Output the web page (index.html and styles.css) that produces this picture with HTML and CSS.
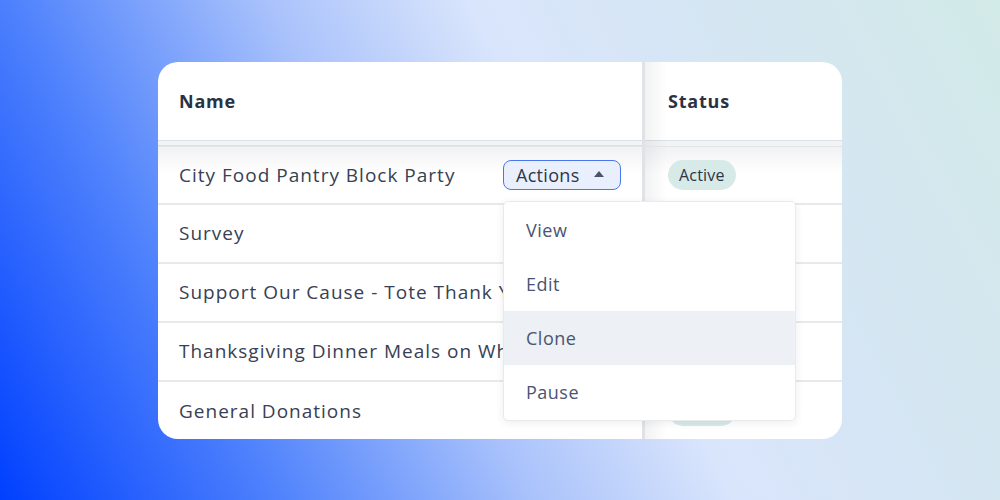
FILE: index.html
```html
<!DOCTYPE html>
<html lang="en">
<head>
    <meta charset="UTF-8">
    <meta name="viewport" content="width=device-width, initial-scale=1.0">
    <title>Campaigns</title>
    <link rel="stylesheet" href="styles.css">
</head>
<body>
    <div class="stage">
        <div class="card">
            <div class="table">
                <div class="row head">
                    <div class="cell name-cell">Name</div>
                    <div class="cell status-cell">Status</div>
                </div>
                <div class="row first">
                    <div class="cell name-cell">
                        <span class="name">City Food Pantry Block Party</span>
                        <button class="actions-btn">Actions <span class="caret"></span></button>
                    </div>
                    <div class="cell status-cell"><span class="badge">Active</span></div>
                </div>
                <div class="row">
                    <div class="cell name-cell"><span class="name">Survey</span></div>
                    <div class="cell status-cell"></div>
                </div>
                <div class="row">
                    <div class="cell name-cell"><span class="name">Support Our Cause - Tote Thank You</span></div>
                    <div class="cell status-cell"></div>
                </div>
                <div class="row">
                    <div class="cell name-cell"><span class="name">Thanksgiving Dinner Meals on Wheels</span></div>
                    <div class="cell status-cell"></div>
                </div>
                <div class="row last">
                    <div class="cell name-cell"><span class="name">General Donations</span></div>
                    <div class="cell status-cell"><span class="badge">Active</span></div>
                </div>
            </div>

            <ul class="menu">
                <li>View</li>
                <li>Edit</li>
                <li class="hover">Clone</li>
                <li>Pause</li>
            </ul>
        </div>
    </div>
</body>
</html>
```

FILE: styles.css
```css
* {
    box-sizing: border-box;
}
body {
    margin: 0;
    width: 1000px;
    height: 500px;
    overflow: hidden;
    font-family: "Open Sans", "Noto Sans", sans-serif;
    color: #384054;
    background: linear-gradient(62deg, #0040ff 0%, #4f82fc 22%, #a9c2fb 42%, #d9e5fc 58%, #d5e6f2 78%, #d2eae8 100%);
}
.stage {
    height: 500px;
    display: flex;
    align-items: center;
    justify-content: center;
}
.card {
    position: relative;
    width: 684px;
    height: 377px;
    background: #fff;
    border-radius: 20px;
    overflow: hidden;
}
.table {
    display: flex;
    flex-direction: column;
}
.row {
    display: grid;
    grid-template-columns: 484px 200px;
    height: 59px;
    border-bottom: 2px solid #e7e9ec;
}
.cell {
    display: flex;
    align-items: center;
    font-size: 18px;
}
.name-cell {
    padding: 0 21px 0 21px;
    justify-content: space-between;
    white-space: nowrap;
    overflow: hidden;
}
.status-cell {
    padding-left: 23px;
    border-left: 3px solid #e0e2e6;
    background: linear-gradient(90deg, rgba(30, 40, 60, 0.06), rgba(30, 40, 60, 0) 22px);
}
.row.head {
    height: 84px;
    border-bottom: none;
    box-shadow: 0 -5px 0 #f2f3f5 inset, 0 -6px 0 #dcdfe3 inset;
    position: relative;
}
.row.head .cell {
    font-weight: 700;
    color: #2b3244;
    letter-spacing: 0.8px;
    padding-bottom: 5px;
}
.row.head .name-cell {
    border-bottom: 1px solid #dcdfe3;
}
.row.first {
    border-top: 1px solid #e2e4e8;
    background: linear-gradient(180deg, #f1f2f4 0, #fff 26px);
    height: 59px;
}
.row.last {
    border-bottom: none;
}
.name {
    display: block;
    max-width: 324px;
    overflow: hidden;
    font-size: 19px;
    letter-spacing: 1px;
}
.actions-btn {
    display: flex;
    align-items: center;
    height: 30px;
    width: 118px;
    padding: 0 0 0 12px;
    gap: 14px;
    border: 1.5px solid #4776ee;
    border-radius: 8px;
    background: #e9effd;
    color: #2f3648;
    font-family: inherit;
    font-size: 18px;
    letter-spacing: 0.3px;
}
.caret {
    width: 0;
    height: 0;
    border-left: 5px solid transparent;
    border-right: 5px solid transparent;
    border-bottom: 6px solid #4b5367;
    margin-top: -2px;
}
.badge {
    display: inline-flex;
    align-items: center;
    height: 30px;
    padding: 0 11px;
    border-radius: 15px;
    background: #d7eae8;
    color: #2c3446;
    font-size: 16px;
    letter-spacing: 0.2px;
}
.menu {
    position: absolute;
    left: 345px;
    top: 139px;
    width: 293px;
    margin: 0;
    padding: 1px 0;
    list-style: none;
    background: #fff;
    border: 1px solid #e8eaed;
    border-radius: 5px;
    box-shadow: 0 2px 8px rgba(30, 40, 60, 0.08);
    z-index: 2;
}
.menu li {
    height: 54px;
    display: flex;
    align-items: center;
    padding-left: 22px;
    font-size: 18px;
    color: #4a5471;
    letter-spacing: 0.5px;
}
.menu li.hover {
    background: #edf0f5;
}
```
